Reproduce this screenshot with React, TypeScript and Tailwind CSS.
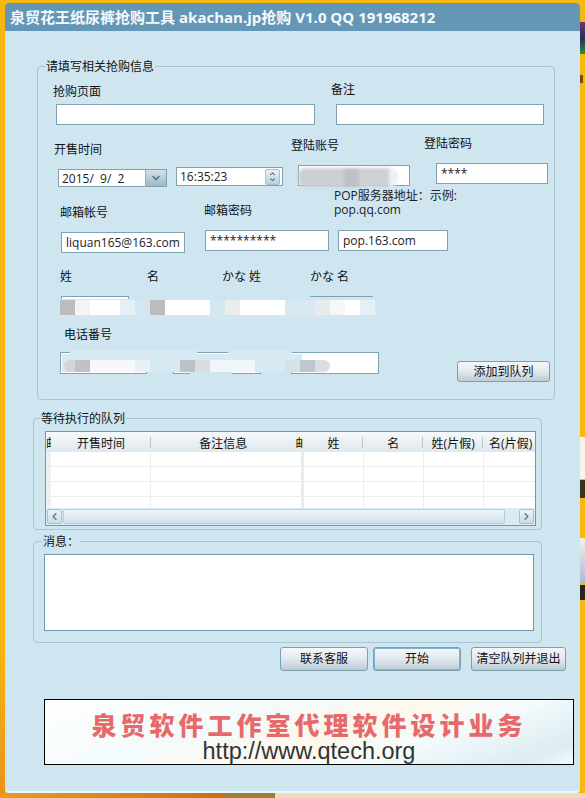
import { ChevronDown, ChevronLeft, ChevronRight, ChevronUp } from 'lucide-react'

const inputBase =
  'block bg-white border border-[#7fa3b2] px-[4px] text-[12px] text-[#222] outline-none'

const Label = ({ className = '', children }: { className?: string; children: string }) => (
  <div className={`relative top-px h-[16px] leading-[16px] text-[12px] whitespace-nowrap text-[#111] ${className}`}>
    {children}
  </div>
)

const Box = ({ className = '', value = '' }: { className?: string; value?: string }) => (
  <input readOnly value={value} className={`${inputBase} ${className}`} />
)

const Btn = ({ className = '', children }: { className?: string; children: string }) => (
  <button className={`flex items-center justify-center rounded-[3px] border border-[#7c9fb1] bg-gradient-to-b from-[#f5f8fa] via-[#e2e9ed] to-[#bccbd6] text-[12px] text-[#111] ${className}`}>
    {children}
  </button>
)

const Legend = ({ className = '', children }: { className?: string; children: string }) => (
  <span className={`absolute top-[-8px] h-[16px] bg-[#cfe6f1] px-[1px] leading-[16px] text-[12px] text-[#111] whitespace-nowrap ${className}`}>
    {children}
  </span>
)

const HeadCell = ({ className = '', children }: { className?: string; children: React.ReactNode }) => (
  <div className={`relative flex items-center justify-center overflow-hidden whitespace-nowrap pt-[4px] text-[12px] text-[#111] ${className}`}>
    {children}
  </div>
)

const Sep = () => <span className="absolute right-0 top-[5px] h-[11px] w-px bg-[#b9c6cd]" />

const BodyRow = () => (
  <div className="flex h-[15px] shrink-0 border-b border-[#e9eeee]">
    <div className="w-[5px] bg-[#eef1f1]" />
    <div className="w-[100px] border-r border-[#e9eeee]" />
    <div className="w-[150px]" />
    <div className="w-[3px] bg-[#e8ecec]" />
    <div className="w-[60px] border-r border-[#e9eeee]" />
    <div className="w-[60px] border-r border-[#e9eeee]" />
    <div className="w-[60px] border-r border-[#e9eeee]" />
    <div className="flex-1" />
  </div>
)

export default function App() {
  return (
    <div className="relative h-[798px] w-[585px] overflow-hidden bg-[#f6b70f] [font-family:'Open_Sans','Noto_Sans_CJK_SC',sans-serif]">
      {/* 背景里露出来的桌面 */}
      <div className="absolute left-0 top-[640px] h-[158px] w-[5px] bg-gradient-to-b from-[#f6b70f] to-[#e8921a]" />
      <div className="absolute bottom-0 left-0 h-[5px] w-[225px] bg-gradient-to-r from-[#ee9a1c] to-[#cf6d12]" />
      <div className="absolute bottom-0 left-[225px] h-[5px] w-[50px] bg-[#a37c34]" />
      <div className="absolute bottom-0 left-[275px] h-[5px] w-[310px] bg-[#efdcc0]" />
      <div className="absolute left-[580px] top-[22px] h-[32px] w-[5px] bg-gradient-to-b from-[#6b3a78] via-[#2a2a55] to-[#2f8a3a]" />
      <div className="absolute left-[580px] top-[75px] h-[8px] w-[3px] bg-[#7a4a10]" />
      <div className="absolute left-[580px] top-[437px] h-[42px] w-[5px] bg-[#f8f4ea]" />
      <div className="absolute left-[580px] top-[480px] h-[18px] w-[5px] bg-[#3a3320]" />
      <div className="absolute left-[580px] top-[538px] h-[45px] w-[5px] bg-gradient-to-b from-[#f5efe6] to-[#a9bdd6]" />
      <div className="absolute left-[580px] top-[585px] h-[15px] w-[5px] bg-[#2a2618]" />

      <div className="relative ml-[5px] mt-[3px] flex h-[790px] w-[575px] flex-col overflow-hidden rounded-[4px] border-b-2 border-[#e2fbff] bg-[#cfe6f1] pt-0">
        <div className="flex h-[28px] shrink-0 items-center bg-[#6496b5] pl-[5px] text-[15px] font-bold leading-none text-[#f4fafc] whitespace-nowrap">
          泉贸花王纸尿裤抢购工具 <span className="ml-[4px]">akachan.jp</span>抢购 <span className="ml-[4px]">V1.0 QQ 191968212</span>
        </div>

        {/* 抢购信息 */}
        <div className="relative ml-[32px] mt-[35px] h-[334px] w-[518px] shrink-0 rounded-[4px] border border-[#a9c5d1] pt-[14px]">
          <Legend className="left-[7px]">请填写相关抢购信息</Legend>

          <div className="flex h-[44px] items-start">
            <div className="ml-[15px] mt-[2px]">
              <Label>抢购页面</Label>
              <Box className="ml-[3px] mt-[5px] h-[21px] w-[259px]" />
            </div>
            <div className="ml-[16px]">
              <Label>备注</Label>
              <Box className="ml-[5px] mt-[7px] h-[21px] w-[208px]" />
            </div>
          </div>

          <div className="flex h-[64px] items-start">
            <div className="ml-[16px] mt-[16px]">
              <Label>开售时间</Label>
              <div className="ml-[4px] mt-[12px] flex h-[18px] w-[109px] border border-[#7fa3b2] bg-white">
                <span className="flex-1 whitespace-pre pl-[3px] text-[12px] leading-[18px] text-[#222]">2015/  9/  2</span>
                <span className="flex w-[21px] items-center justify-center border-l border-[#8fb0bf] bg-gradient-to-b from-[#d3e2ea] to-[#9db8c8]">
                  <ChevronDown size={12} strokeWidth={3} className="text-[#4f7289]" />
                </span>
              </div>
            </div>
            <div className="ml-[9px] mt-[42px] flex h-[19px] w-[107px] items-center justify-between border border-[#7fa3b2] bg-white pl-[3px] pr-[2px] text-[12px] text-[#222]">
              16:35:23
              <span className="flex h-[16px] w-[15px] flex-col items-center justify-center rounded-[2px] border border-[#a9bfca] bg-gradient-to-b from-[#e9f0f4] to-[#bccfda]">
                <ChevronUp size={9} strokeWidth={3.5} className="-mb-px text-[#4f7289]" />
                <ChevronDown size={9} strokeWidth={3.5} className="text-[#4f7289]" />
              </span>
            </div>
            <div className="ml-[8px] mt-[12px]">
              <Label>登陆账号</Label>
              <div className="relative ml-[7px] mt-[12px]">
                <Box className="h-[21px] w-[112px]" />
                <div className="absolute left-0 top-[3px] flex h-[19px] w-[100px] overflow-hidden rounded-[8px] blur-[1.5px]">
                  <div className="w-[46px] bg-[#cdd0d2]" />
                  <div className="w-[15px] bg-[#bfc2c4]" />
                  <div className="w-[30px] bg-[#cfd2d4]" />
                  <div className="flex-1 bg-[#ecf0f2]" />
                </div>
              </div>
            </div>
            <div className="ml-[14px] mt-[10px]">
              <Label>登陆密码</Label>
              <Box className="ml-[12px] mt-[12px] h-[21px] w-[112px]" value="****" />
            </div>
          </div>

          <div className="flex h-[64px] items-start">
            <div className="ml-[22px] mt-[15px]">
              <Label>邮箱帐号</Label>
              <Box className="ml-px mt-[12px] h-[21px] w-[124px]" value="liquan165@163.com" />
            </div>
            <div className="ml-[19px] mt-[13px]">
              <Label>邮箱密码</Label>
              <Box className="ml-px mt-[12px] h-[21px] w-[124px]" value="**********" />
            </div>
            <div className="ml-[5px]">
              <div className="h-[14px] text-[12px] leading-[14px] text-[#222] whitespace-nowrap">POP服务器地址：示例:</div>
              <div className="h-[14px] text-[12px] leading-[14px] text-[#222]">pop.qq.com</div>
              <Box className="ml-[4px] mt-[13px] h-[21px] w-[110px]" value="pop.163.com" />
            </div>
          </div>

          {/* 姓名，打了码 */}
          <div className="relative flex h-[64px] items-start">
            <div className="ml-[22px] mt-[15px]">
              <Label>姓</Label>
              <Box className="ml-px mt-[12px] h-[21px] w-[68px]" />
            </div>
            <div className="ml-[18px] mt-[15px]">
              <Label>名</Label>
              <Box className="ml-[3px] mt-[12px] h-[21px] w-[60px]" />
            </div>
            <div className="ml-[12px] mt-[15px]">
              <Label>かな 姓</Label>
              <Box className="ml-[3px] mt-[12px] h-[21px] w-[60px]" />
            </div>
            <div className="ml-[25px] mt-[15px]">
              <Label>かな 名</Label>
              <Box className="mt-[12px] h-[21px] w-[63px]" />
            </div>
            <div className="absolute left-[21px] top-[46px] h-[20px] w-[318px] bg-[#d3e7f2]" />
            <div className="absolute left-[92px] top-[41px] h-[6px] w-[180px] bg-[#cfe6f1]" />
            <div className="absolute left-[271px] top-[44px] h-[3px] w-[66px] bg-[#cfe6f1]" />
            <div className="absolute left-[22px] top-[47px] flex h-[15px] blur-[0.5px]">
              <div className="w-[15px] bg-[#bdbdbd]" />
              <div className="w-[15px] bg-[#f2f4f5]" />
              <div className="w-[30px] bg-white" />
              <div className="w-[15px] bg-[#e6eff3]" />
              <div className="w-[15px]" />
              <div className="w-[15px] bg-[#bcbcbc]" />
              <div className="w-[45px] bg-white" />
              <div className="w-[15px]" />
              <div className="w-[15px] bg-[#ececec]" />
              <div className="w-[45px] bg-white" />
              <div className="w-[30px] bg-[#d9e9f1]" />
              <div className="w-[15px] bg-[#e8ebee]" />
              <div className="w-[15px] bg-[#f5f7f8]" />
              <div className="w-[15px] bg-white" />
              <div className="w-[15px] bg-[#e6eef6]" />
            </div>
          </div>

          {/* 电话，打了码 */}
          <div className="ml-[26px] mt-[9px]">
            <Label>电话番号</Label>
          </div>
          <div className="relative mt-[10px] flex items-start">
            <Box className="ml-[22px] h-[22px] w-[87px]" />
            <Box className="ml-[26px] h-[22px] w-[88px]" />
            <Box className="ml-[30px] h-[22px] w-[88px]" />
            <Btn className="ml-[78px] mt-[9px] h-[21px] w-[93px]">添加到队列</Btn>
            <div className="absolute left-[32px] top-[-2px] h-[22px] w-[127px] bg-[#d7e9f2]" />
            <div className="absolute left-[190px] top-[-2px] h-[22px] w-[64px] bg-[#d7e9f2]" />
            <div className="absolute left-[24px] top-[2px] h-[18px] w-[240px] bg-[#d7e9f2]" />
            <div className="absolute left-[152px] top-[19px] h-[5px] w-[42px] bg-[#cfe6f1]" />
            <div className="absolute left-[26px] top-[8px] flex h-[12px] blur-[0.5px]">
              <div className="w-[11px] rounded-l-full bg-[#d5d5d5]" />
              <div className="w-[15px] bg-[#bfc3c5]" />
              <div className="w-[45px] bg-[#f6f8f9]" />
              <div className="w-[15px] bg-[#e9f1f5]" />
              <div className="w-[30px]" />
              <div className="w-[15px] bg-[#bcc3c8]" />
              <div className="w-[15px] bg-[#d8dde0]" />
              <div className="w-[45px] bg-[#f0f6f9]" />
              <div className="w-[30px]" />
              <div className="w-[15px] bg-[#d6e2e9]" />
              <div className="w-[15px] bg-[#bfc6cd]" />
              <div className="w-[15px] rounded-r-full bg-[#d9dee3]" />
            </div>
          </div>
        </div>

        {/* 队列 */}
        <div className="relative ml-[28px] mt-[18px] h-[112px] w-[509px] shrink-0 rounded-[4px] border border-[#a9c5d1] pl-[11px] pt-[12px]">
          <Legend className="left-[6px]">等待执行的队列</Legend>
          <div className="flex h-[95px] w-[491px] flex-col overflow-hidden border border-[#6f9aa9] bg-white">
            <div className="flex h-[20px] shrink-0 bg-gradient-to-b from-[#f5f9fb] to-[#dfe8ee]">
              <HeadCell className="w-[5px] !justify-start">邮箱</HeadCell>
              <HeadCell className="w-[100px]">开售时间<Sep /></HeadCell>
              <HeadCell className="w-[145px]">备注信息</HeadCell>
              <HeadCell className="w-[8px] !justify-start">邮箱</HeadCell>
              <HeadCell className="w-[60px]">姓<Sep /></HeadCell>
              <HeadCell className="w-[60px]">名<Sep /></HeadCell>
              <HeadCell className="w-[60px]">姓(片假)<Sep /></HeadCell>
              <HeadCell className="w-[52px] !justify-start pl-[6px]">名(片假)</HeadCell>
            </div>
            <div className="flex h-[56px] shrink-0 flex-col overflow-hidden">
              <BodyRow />
              <BodyRow />
              <BodyRow />
              <BodyRow />
            </div>
            <div className="flex h-[17px] shrink-0 items-center gap-px bg-[#dcebf3] px-px">
              <span className="flex h-[15px] w-[15px] items-center justify-center rounded-[2px] border border-[#a8c0cc] bg-gradient-to-b from-[#eef4f7] to-[#c9dbe5]">
                <ChevronLeft size={11} strokeWidth={3.5} className="text-[#62808f]" />
              </span>
              <span className="h-[15px] w-[442px] rounded-[2px] border border-[#b7ced9] bg-gradient-to-b from-[#f0f6f9] to-[#cfe2ec]" />
              <span className="ml-auto flex h-[15px] w-[15px] items-center justify-center rounded-[2px] border border-[#a8c0cc] bg-gradient-to-b from-[#eef4f7] to-[#c9dbe5]">
                <ChevronRight size={11} strokeWidth={3.5} className="text-[#62808f]" />
              </span>
            </div>
          </div>
        </div>

        {/* 消息 */}
        <div className="relative ml-[28px] mt-[11px] h-[102px] w-[509px] shrink-0 rounded-[4px] border border-[#a9c5d1] pl-[10px] pt-[12px]">
          <Legend className="left-[8px]">消息：</Legend>
          <div className="h-[77px] w-[490px] border border-[#6f9aa9] bg-white" />
        </div>

        <div className="ml-[275px] mt-[4px] flex h-[24px] shrink-0">
          <Btn className="w-[88px]">联系客服</Btn>
          <Btn className="ml-[5px] w-[88px] ring-1 ring-inset ring-[#7fb4d0]">开始</Btn>
          <Btn className="ml-[10px] w-[95px]">清空队列并退出</Btn>
        </div>

        <div className="ml-[39px] mt-[28px] flex h-[66px] w-[530px] shrink-0 flex-col items-center overflow-hidden border border-black bg-[linear-gradient(160deg,#ffffff_0%,#f4fafa_35%,#fdf8ec_55%,#f4fbfb_70%,#dcecf2_92%,#f6fbfb_100%)]">
          <div className="mt-[11px] h-[28px] whitespace-nowrap text-[25px] font-black leading-[28px] tracking-[4px] text-[#e8696b]">
            泉贸软件工作室代理软件设计业务
          </div>
          <div className="text-[23.5px] leading-[24px] text-[#333] [font-family:'Liberation_Sans',sans-serif]">
            http://www.qtech.org
          </div>
        </div>
      </div>
    </div>
  )
}
